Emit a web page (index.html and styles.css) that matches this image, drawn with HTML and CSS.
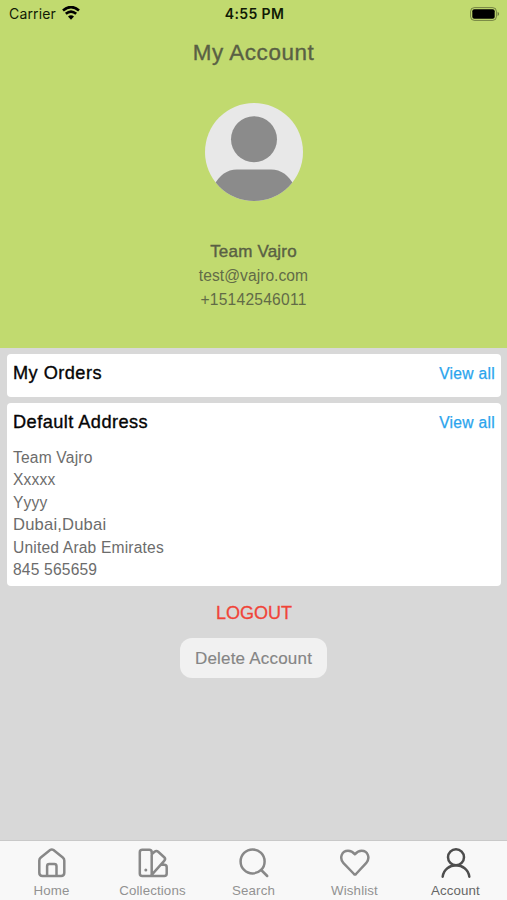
FILE: index.html
```html
<!DOCTYPE html>
<html lang="en">
<head>
<meta charset="utf-8">
<title>My Account</title>
<link rel="stylesheet" href="styles.css">
</head>
<body>
<div class="app">
  <header class="profile">
    <div class="status">
      <div class="carrier"><span>Carrier</span>
        <svg width="18" height="14" viewBox="0 0 18 14" fill="none" stroke="#000" stroke-width="2.6"><path d="M1 4.5Q9-2.4 17 4.5M3.8 7.8Q9 3.4 14.2 7.8"/><path d="M9 13.8 6 10.6Q9 7.9 12 10.6Z" fill="#000" stroke="none"/></svg>
      </div>
      <div class="time">4:55 PM</div>
      <svg class="battery" width="30" height="14" viewBox="0 0 30 14"><rect x=".6" y=".6" width="25.8" height="12.8" rx="3.8" fill="none" stroke="#000" stroke-opacity=".4" stroke-width="1"/><rect x="2.3" y="2.3" width="22.4" height="9.4" rx="2" fill="#000"/><path d="M27.6 4.8q3 2.2 0 4.4z" fill="#000" fill-opacity=".45"/></svg>
    </div>
    <h1>My Account</h1>
    <svg class="avatar" width="98" height="98" viewBox="0 0 98 98"><defs><clipPath id="disc"><circle cx="49" cy="49" r="49"/></clipPath></defs><circle cx="49" cy="49" r="49" fill="#e8e8e8"/><g clip-path="url(#disc)" fill="#8b8b8b"><circle cx="49" cy="36.2" r="23"/><path d="M8 84Q17 66.6 32 66.6H66Q81 66.6 90 84V98H8Z"/></g></svg>
    <div class="name">Team Vajro</div>
    <div class="contact">test@vajro.com</div>
    <div class="contact phone">+15142546011</div>
  </header>
  <main>
    <section class="card orders">
      <div class="card-head"><h2>My Orders</h2><a>View all</a></div>
    </section>
    <section class="card address">
      <div class="card-head"><h2>Default Address</h2><a>View all</a></div>
      <div class="lines"><p>Team Vajro</p><p>Xxxxx</p><p>Yyyy</p><p class="city">Dubai,Dubai</p><p>United Arab Emirates</p><p>845 565659</p></div>
    </section>
    <div class="logout">LOGOUT</div>
    <button class="delete">Delete Account</button>
  </main>
  <nav>
    <div class="tab"><svg width="32" height="32" viewBox="0 0 32 32"><path d="M3.3 13.4Q3.3 11.6 4.8 10.4L14.1 3.1Q15.8 1.9 17.5 3.1L26.8 10.4Q28.3 11.6 28.3 13.4V25.8Q28.3 29 25.1 29H6.5Q3.3 29 3.3 25.8ZM11.1 29V19.2Q11.1 17 13.3 17H18.3Q20.5 17 20.5 19.2V29"/></svg><span>Home</span></div>
    <div class="tab"><svg width="32" height="32" viewBox="0 0 32 32"><path d="M5.3 2.8H12.2Q14.7 2.8 14.7 5.3V29H5.3Q2.8 29 2.8 26.5V5.3Q2.8 2.8 5.3 2.8ZM14.7 7.2 17.5 4.8Q19.4 3.2 21.2 4.8L27.2 10.2Q29 12 27.2 13.9L14 28.6M24.2 17.8H27.2Q29.7 17.8 29.7 20.3V26.5Q29.7 29 27.2 29H12"/><circle cx="8.8" cy="23.1" r="1.5" class="dot"/></svg><span>Collections</span></div>
    <div class="tab"><svg width="32" height="32" viewBox="0 0 32 32"><circle cx="14.6" cy="14.4" r="12"/><path d="m23.2 23 6 6"/></svg><span>Search</span></div>
    <div class="tab"><svg width="32" height="32" viewBox="0 0 32 32"><path d="M15 27 4.5 16.2C-.2 10.6 3.1 3.8 9 3.8Q13 3.8 15.8 7.3Q19 3.8 22.6 3.8C28.5 3.8 31.8 10.6 27.1 16.2L17 27Q16 28 15 27"/></svg><span>Wishlist</span></div>
    <div class="tab active"><svg width="32" height="32" viewBox="0 0 32 32"><circle cx="16" cy="10.2" r="8"/><path d="M2.7 29.7C4.5 14.5 27.5 14.5 29.3 29.7"/></svg><span>Account</span></div>
  </nav>
</div>
</body>
</html>
```
FILE: styles.css
```css
* { box-sizing: border-box; }
body { margin: 0; font-family: "Liberation Sans", Arial, sans-serif; background: #d8d8d8; }
h1, h2, p { margin: 0; font-weight: 400; }
.app { width: 507px; height: 900px; display: flex; flex-direction: column; overflow: hidden; }
.profile { height: 348px; background: #c1da6f; display: flex; flex-direction: column; align-items: center; color: #5e693c; flex: none; }
.status { width: 100%; height: 27px; padding: 0 7px 0 9px; display: grid; grid-template-columns: 1fr auto 1fr; align-items: center; color: #111a05; font-family: Inter, sans-serif; }
.carrier { display: flex; align-items: center; gap: 6px; font-size: 14px; letter-spacing: .15px; }
.carrier svg { margin-bottom: 2px; }
.time { font-size: 14px; font-weight: 600; letter-spacing: .4px; }
.battery { justify-self: end; }
h1 { height: 30px; margin-top: 10px; font-size: 22.4px; line-height: 32px; letter-spacing: .6px; color: #596044; -webkit-text-stroke: .35px; }
.avatar { margin-top: 36px; display: block; flex: none; }
.name { margin-top: 38px; height: 24px; line-height: 26px; font-size: 17px; letter-spacing: .2px; color: #596044; -webkit-text-stroke: .4px; }
.contact { height: 24px; line-height: 25px; font-size: 15.6px; letter-spacing: .05px; color: #626b47; }
.phone { letter-spacing: .23px; line-height: 26px; }
main { flex: 1; padding: 6px 6px 0 7px; display: flex; flex-direction: column; align-items: center; }
.card { width: 100%; background: #fff; border-radius: 4px; padding: 7px 6px 0; }
.orders { height: 43px; margin-bottom: 6px; }
.address { height: 183px; }
.card-head { display: flex; justify-content: space-between; height: 25px; line-height: 25px; }
h2 { font-size: 18.2px; letter-spacing: .45px; color: #050505; -webkit-text-stroke: .35px; }
.card-head a { font-size: 15.6px; line-height: 25px; letter-spacing: .3px; color: #2ba4ed; -webkit-text-stroke: .25px; }
.lines { margin-top: 12px; font-size: 15.6px; line-height: 22.4px; letter-spacing: .18px; color: #6c6c6c; }
.city { font-size: 16.6px; }
.logout { margin-top: 14px; height: 24px; line-height: 26px; font-size: 18px; color: #f04438; -webkit-text-stroke: .3px; }
.delete { margin: 14px 1px 0 0; width: 147px; height: 40px; border: 0; border-radius: 12px; padding: 1px 0 0; background: #f1f1f1; color: #858585; font: 17px "Liberation Sans", sans-serif; letter-spacing: .2px; -webkit-text-stroke: .15px; }
nav { height: 60px; flex: none; background: #f8f8f8; border-top: 1px solid #c9c9c9; display: grid; grid-template-columns: repeat(5, 101px); justify-content: center; }
.tab { display: flex; flex-direction: column; align-items: center; padding-top: 6px; color: #929292; font-size: 13.3px; }
.tab svg { display: block; fill: none; stroke: #888; stroke-width: 2.5; stroke-linecap: round; stroke-linejoin: round; }
.tab svg .dot { fill: #888; stroke: none; }
.tab span { margin-top: 4px; line-height: 16px; letter-spacing: .12px; }
.tab.active { color: #666; }
.tab.active svg { stroke: #4d4d4d; }
```
